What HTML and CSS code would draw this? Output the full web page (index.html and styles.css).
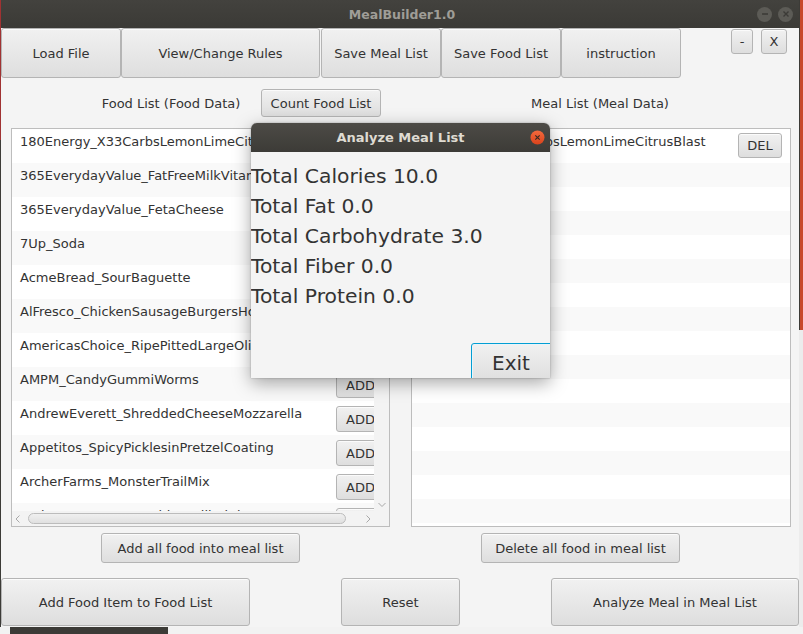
FILE: index.html
```html
<!DOCTYPE html>
<html>
<head>
<meta charset="utf-8">
<title>MealBuilder1.0</title>
<link rel="stylesheet" href="styles.css">
</head>
<body>
<div class="screen">
  <div class="top">
    <div class="edge-left"></div>
    <div class="window">
      <div class="titlebar">
        <span></span>
        <span class="title">MealBuilder1.0</span>
        <div class="wm">
          <span class="wm-btn"><svg width="14" height="14" viewBox="0 0 14 14"><line x1="4" y1="7" x2="10" y2="7" stroke="#3c3b37" stroke-width="1.6"/></svg></span>
          <span class="wm-btn"><svg width="14" height="14" viewBox="0 0 14 14"><path d="M4.5 4.5 L9.5 9.5 M9.5 4.5 L4.5 9.5" stroke="#3c3b37" stroke-width="1.4"/></svg></span>
        </div>
      </div>
      <div class="content">
        <div class="row-top">
          <button class="btn w120">Load File</button>
          <button class="btn w199">View/Change Rules</button>
          <button class="btn w120 ml1">Save Meal List</button>
          <button class="btn w120">Save Food List</button>
          <button class="btn w120">instruction</button>
          <button class="btn small minus">-</button>
          <button class="btn small close">X</button>
        </div>
        <div class="row-labels">
          <span class="lbl lbl-food">Food List (Food Data)</span>
          <button class="btn count">Count Food List</button>
          <span class="lbl lbl-meal">Meal List (Meal Data)</span>
        </div>
        <div class="row-lists">
          <div class="list food-list">
            <div class="viewport">
              <div class="frow"><span class="ftext">180Energy_X33CarbsLemonLimeCitrusBlast</span><button class="btn add">ADD</button></div>
              <div class="frow"><span class="ftext">365EverydayValue_FatFreeMilkVitaminAD</span><button class="btn add">ADD</button></div>
              <div class="frow"><span class="ftext">365EverydayValue_FetaCheese</span><button class="btn add">ADD</button></div>
              <div class="frow"><span class="ftext">7Up_Soda</span><button class="btn add">ADD</button></div>
              <div class="frow"><span class="ftext">AcmeBread_SourBaguette</span><button class="btn add">ADD</button></div>
              <div class="frow"><span class="ftext">AlFresco_ChickenSausageBurgersHotItalian</span><button class="btn add">ADD</button></div>
              <div class="frow"><span class="ftext">AmericasChoice_RipePittedLargeOlives</span><button class="btn add">ADD</button></div>
              <div class="frow"><span class="ftext">AMPM_CandyGummiWorms</span><button class="btn add">ADD</button></div>
              <div class="frow"><span class="ftext">AndrewEverett_ShreddedCheeseMozzarella</span><button class="btn add">ADD</button></div>
              <div class="frow"><span class="ftext">Appetitos_SpicyPicklesinPretzelCoating</span><button class="btn add">ADD</button></div>
              <div class="frow"><span class="ftext">ArcherFarms_MonsterTrailMix</span><button class="btn add">ADD</button></div>
              <div class="frow"><span class="ftext">ArcherFarms_PotatoChipsGrilledCheese</span><button class="btn add">ADD</button></div>
            </div>
            <div class="vscroll"><svg width="10" height="8" viewBox="0 0 10 8"><path d="M1.5 2 L5 5.5 L8.5 2" fill="none" stroke="#a8a8a8" stroke-width="1"/></svg></div>
            <div class="hscroll">
              <svg width="8" height="10" viewBox="0 0 8 10"><path d="M5.5 1.5 L2 5 L5.5 8.5" fill="none" stroke="#a8a8a8" stroke-width="1"/></svg>
              <div class="thumb"></div>
              <svg width="8" height="10" viewBox="0 0 8 10"><path d="M2.5 1.5 L6 5 L2.5 8.5" fill="none" stroke="#a8a8a8" stroke-width="1"/></svg>
            </div>
            <div class="corner"></div>
          </div>
          <div class="list meal-list">
            <div class="mrow first"><span class="mtext">180Energy_X33CarbsLemonLimeCitrusBlast</span><button class="btn del">DEL</button></div>
            <div class="mrow"></div><div class="mrow"></div><div class="mrow"></div><div class="mrow"></div>
            <div class="mrow"></div><div class="mrow"></div><div class="mrow"></div><div class="mrow"></div>
            <div class="mrow"></div><div class="mrow"></div><div class="mrow"></div><div class="mrow"></div>
            <div class="mrow"></div><div class="mrow"></div><div class="mrow"></div><div class="mrow"></div>
          </div>
        </div>
        <div class="row-mid">
          <button class="btn mid add-all">Add all food into meal list</button>
          <button class="btn mid del-all">Delete all food in meal list</button>
        </div>
        <div class="row-bottom">
          <button class="btn big b1">Add Food Item to Food List</button>
          <button class="btn big b2">Reset</button>
          <button class="btn big b3">Analyze Meal in Meal List</button>
        </div>

        <div class="dialog">
          <div class="dlg-title">
            <span></span>
            <span class="dlg-name">Analyze Meal List</span>
            <span class="dlg-close"><svg width="15" height="15" viewBox="0 0 15 15"><defs><linearGradient id="g" x1="0" y1="0" x2="0" y2="1"><stop offset="0" stop-color="#f4693d"/><stop offset="1" stop-color="#d9431c"/></linearGradient></defs><circle cx="7.5" cy="7.5" r="7" fill="url(#g)"/><path d="M5.3 5.3 L9.7 9.7 M9.7 5.3 L5.3 9.7" stroke="#3c2a22" stroke-width="1.2"/></svg></span>
          </div>
          <div class="dlg-body">
            <div class="stat">Total Calories 10.0</div>
            <div class="stat">Total Fat 0.0</div>
            <div class="stat">Total Carbohydrate 3.0</div>
            <div class="stat">Total Fiber 0.0</div>
            <div class="stat">Total Protein 0.0</div>
            <button class="btn exit">Exit</button>
          </div>
        </div>
      </div>
    </div>
    <div class="edge-right"></div>
  </div>
  <div class="bottom-strip"><span class="dark-piece"></span></div>
</div>
</body>
</html>
```
FILE: styles.css
```css
* { box-sizing: border-box; }
html, body { margin: 0; padding: 0; }
body {
  width: 803px; height: 634px; overflow: hidden;
  font-family: "DejaVu Sans", sans-serif;
  font-size: 13px; color: #333;
  background: #f2f2f2;
}
.screen { display: flex; flex-direction: column; width: 803px; height: 634px; }
.top { display: flex; height: 627px; flex-shrink: 0; }
.edge-left { width: 1px; background: linear-gradient(#a03232 0 140px, #3c3b37 140px); }
.edge-right { width: 4px; background: linear-gradient(90deg, #3c3b37 0 1px, #c8482a 1px) top/100% 330px no-repeat, #ececec; }
.window { width: 798px; display: flex; flex-direction: column; }
.titlebar {
  height: 28px; flex-shrink: 0; background: linear-gradient(#43423e, #3b3a36);
  display: grid; grid-template-columns: 1fr auto 1fr; align-items: center;
}
.title { font-weight: bold; font-size: 12.5px; color: #9f9d97; padding-left: 4px; }
.wm { justify-self: end; display: flex; gap: 6px; padding-right: 6px; }
.wm-btn { width: 15px; height: 15px; border-radius: 50%; background: #5c5b56; display: flex; align-items: center; justify-content: center; }
.content { position: relative; flex: 1; background: #f4f4f4; display: flex; flex-direction: column; }

.btn {
  font-family: "DejaVu Sans", sans-serif; font-size: 13px; color: #333;
  border: 1px solid #b4b4b4; border-radius: 3px;
  background: linear-gradient(#f1f1f1, #dedede);
  box-shadow: inset 0 1px 0 rgba(255,255,255,0.7);
  padding: 0; margin: 0; cursor: default;
}
.row-top { display: flex; height: 50px; align-items: stretch; flex-shrink: 0; }
.w120 { width: 120px; }
.w199 { width: 199px; }
.ml1 { margin-left: 1px; }
.small { height: 25px; align-self: flex-start; margin-top: 1px; }
.minus { width: 22px; margin-left: 50px; }
.close { width: 26px; margin-left: 8px; }

.row-labels { display: flex; align-items: center; height: 28px; margin-top: 11px; flex-shrink: 0; }
.lbl { text-align: center; }
.lbl-food { margin-left: 100px; width: 140px; }
.count { margin-left: 20px; width: 120px; height: 28px; }
.lbl-meal { margin-left: 150px; width: 138px; }

.row-lists { display: flex; margin-top: 11px; height: 399px; flex-shrink: 0; }
.list { border: 1px solid #bdbdbd; background: #fff; height: 399px; overflow: hidden; }
.food-list {
  margin-left: 10px; width: 379px;
  display: grid; grid-template-columns: 362px 15px; grid-template-rows: 382px 15px;
}
.viewport { overflow: hidden; }
.frow { display: flex; height: 34px; width: 400px; background: #fff; align-items: flex-start; }
.frow:nth-child(even) { background: #f9f9f9; }
.ftext { width: 324px; padding: 5px 0 0 8px; line-height: 15px; white-space: nowrap; overflow: hidden; }
.add { width: 46px; height: 26px; margin-top: 5px; text-align: left; padding-left: 9px; flex-shrink: 0; }
.vscroll { background: #f3f3f3; display: flex; align-items: flex-end; justify-content: center; padding-bottom: 2px; }
.hscroll { background: #f3f3f3; display: flex; align-items: center; padding: 0 2px 0 2px; gap: 4px; }
.thumb {
  width: 318px; height: 11px; border-radius: 6px; border: 1px solid #bcbcbc;
  background: linear-gradient(#f0f0f0, #e0e0e0); margin-left: 2px; margin-right: 14px;
}
.corner { background: #f3f3f3; }

.meal-list { margin-left: 21px; width: 380px; }
.mrow { height: 24px; background: #fff; }
.mrow:nth-child(even) { background: #f9f9f9; }
.mrow.first { height: 34px; display: flex; justify-content: space-between; align-items: flex-start; }
.mtext { padding: 5px 0 0 8px; line-height: 15px; white-space: nowrap; }
.del { width: 44px; height: 25px; margin: 4px 8px 0 0; flex-shrink: 0; }

.row-mid { display: flex; margin-top: 6px; height: 30px; flex-shrink: 0; }
.mid { width: 199px; height: 30px; }
.add-all { margin-left: 100px; }
.del-all { margin-left: 181px; }

.row-bottom { display: flex; margin-top: 15px; height: 48px; flex-shrink: 0; }
.big { height: 48px; }
.b1 { width: 249px; }
.b2 { width: 119px; margin-left: 91px; }
.b3 { width: 248px; margin-left: 91px; }

.dialog {
  position: absolute; left: 250px; top: 95px; width: 299px; height: 255px;
  border-radius: 6px 6px 0 0; overflow: hidden;
  box-shadow: 0 5px 18px rgba(0,0,0,0.35), 0 0 2px rgba(0,0,0,0.3);
  display: flex; flex-direction: column; background: #f4f4f4;
}
.dlg-title {
  height: 29px; flex-shrink: 0; background: linear-gradient(#4d4b46, #3c3b37);
  display: grid; grid-template-columns: 1fr auto 1fr; align-items: center;
}
.dlg-name { font-weight: bold; font-size: 13px; color: #dfdbd2; }
.dlg-close { justify-self: end; padding-right: 5px; display: flex; }
.dlg-body { flex: 1; min-height: 0; overflow: hidden; display: flex; flex-direction: column; padding-top: 9px; }
.stat { font-size: 20.3px; line-height: 30px; color: #333; white-space: nowrap; flex-shrink: 0; }
.exit {
  align-self: flex-end; margin-top: 32px; margin-right: -3px; flex-shrink: 0;
  width: 82px; height: 40px; font-size: 20px; text-align: left; padding-left: 20px;
  border: 1px solid #039ed3; box-shadow: inset 0 0 0 1px #e8f4fa;
}

.bottom-strip { height: 7px; background: #f2f2f2; display: flex; }
.dark-piece { margin-left: 10px; width: 158px; background: #3c3b37; }
```
